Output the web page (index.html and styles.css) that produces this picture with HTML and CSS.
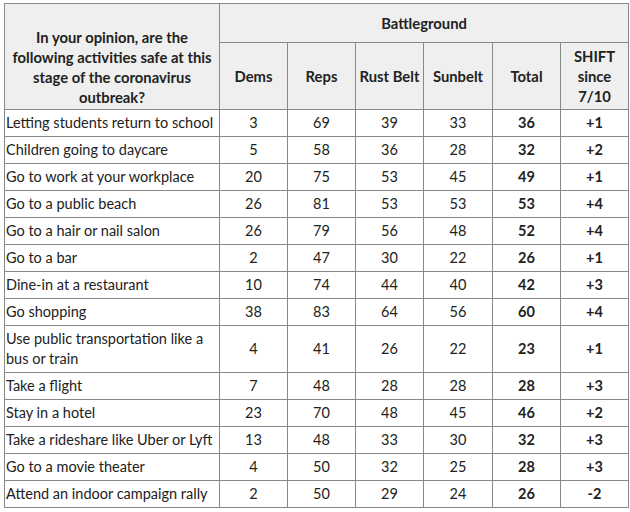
FILE: index.html
```html
<!DOCTYPE html>
<html>
<head>
<meta charset="utf-8">
<link rel="stylesheet" href="styles.css">
</head>
<body>
<table class="poll">
  <colgroup>
    <col class="c-q">
    <col class="c-n"><col class="c-n"><col class="c-n"><col class="c-n5"><col class="c-n"><col class="c-n">
  </colgroup>
  <thead>
    <tr class="h1">
      <th rowspan="2" class="q">In your opinion, are the following activities safe at this stage of the coronavirus outbreak?</th>
      <th colspan="6">Battleground</th>
    </tr>
    <tr class="h2">
      <th>Dems</th><th>Reps</th><th>Rust Belt</th><th>Sunbelt</th><th>Total</th><th>SHIFT since 7/10</th>
    </tr>
  </thead>
  <tbody>
    <tr><td>Letting students return to school</td><td>3</td><td>69</td><td>39</td><td>33</td><td class="b">36</td><td class="b">+1</td></tr>
    <tr><td>Children going to daycare</td><td>5</td><td>58</td><td>36</td><td>28</td><td class="b">32</td><td class="b">+2</td></tr>
    <tr><td>Go to work at your workplace</td><td>20</td><td>75</td><td>53</td><td>45</td><td class="b">49</td><td class="b">+1</td></tr>
    <tr><td>Go to a public beach</td><td>26</td><td>81</td><td>53</td><td>53</td><td class="b">53</td><td class="b">+4</td></tr>
    <tr><td>Go to a hair or nail salon</td><td>26</td><td>79</td><td>56</td><td>48</td><td class="b">52</td><td class="b">+4</td></tr>
    <tr><td>Go to a bar</td><td>2</td><td>47</td><td>30</td><td>22</td><td class="b">26</td><td class="b">+1</td></tr>
    <tr><td>Dine-in at a restaurant</td><td>10</td><td>74</td><td>44</td><td>40</td><td class="b">42</td><td class="b">+3</td></tr>
    <tr><td>Go shopping</td><td>38</td><td>83</td><td>64</td><td>56</td><td class="b">60</td><td class="b">+4</td></tr>
    <tr class="tall"><td>Use public transportation like a bus or train</td><td>4</td><td>41</td><td>26</td><td>22</td><td class="b">23</td><td class="b">+1</td></tr>
    <tr><td>Take a flight</td><td>7</td><td>48</td><td>28</td><td>28</td><td class="b">28</td><td class="b">+3</td></tr>
    <tr><td>Stay in a hotel</td><td>23</td><td>70</td><td>48</td><td>45</td><td class="b">46</td><td class="b">+2</td></tr>
    <tr><td>Take a rideshare like Uber or Lyft</td><td>13</td><td>48</td><td>33</td><td>30</td><td class="b">32</td><td class="b">+3</td></tr>
    <tr><td>Go to a movie theater</td><td>4</td><td>50</td><td>32</td><td>25</td><td class="b">28</td><td class="b">+3</td></tr>
    <tr><td>Attend an indoor campaign rally</td><td>2</td><td>50</td><td>29</td><td>24</td><td class="b">26</td><td class="b">-2</td></tr>
  </tbody>
</table>
</body>
</html>
```

FILE: styles.css
```css
html, body {
  margin: 0;
  padding: 0;
  background: #fff;
}
body {
  padding: 3px 0 0 4px;
  font-family: Lato, "Liberation Sans", sans-serif;
  color: #222;
}
.poll {
  border-collapse: collapse;
  table-layout: fixed;
  width: 625px;
  font-size: 14.5px;
}
.c-q { width: 215px; }
.c-n { width: 68px; }
.c-n5 { width: 69px; }
.poll th, .poll td {
  border: 1px solid #888;
  padding: 0 1px;
  text-align: center;
  vertical-align: middle;
}
.poll th {
  background: #efefef;
  font-weight: 700;
  font-size: 14.8px;
  line-height: 20px;
}
.poll .h1 { height: 39px; }
.poll .h2 { height: 67px; }
.poll th.q {
  padding: 0 4px 2px;
  vertical-align: bottom;
}
.poll td { height: 26px; line-height: 20px; }
.poll td:first-child { text-align: left; }
.poll tr.tall td { height: 46px; }
.poll td.b { font-weight: 700; }
```
